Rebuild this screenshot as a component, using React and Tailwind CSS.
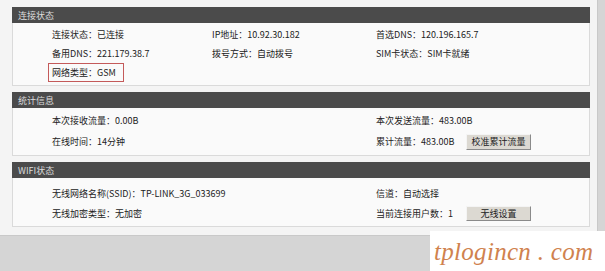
import React from "react";

const font = { fontFamily: '"Noto Sans CJK SC", "Liberation Sans", sans-serif' };

function Header({ title }) {
  return (
    <div className="h-[16px] bg-[#4b4b4b] flex items-center pl-[6px] text-[9px] text-[#dcdcdc] leading-none">
      {title}
    </div>
  );
}

function Btn({ children, h }) {
  return (
    <div
      className={`w-[65px] ${h} flex items-center justify-center text-[9px] leading-none text-[#222] bg-[#dcd9d2] border border-t-[#f4f4f4] border-l-[#f4f4f4] border-r-[#8a8a8a] border-b-[#8a8a8a]`}
    >
      {children}
    </div>
  );
}

export default function App() {
  return (
    <div
      className="relative w-[605px] h-[271px] bg-[#d5d5d5] overflow-hidden text-[#222]"
      style={font}
    >
      <div className="w-[598px] h-[236px] bg-[#f4f4f4] border-r border-b border-[#c9c9c9] pt-[7px] pl-[12px] flex flex-col">
        {/* Panel 1 */}
        <div className="w-[578px]">
          <Header title="连接状态" />
          <div className="h-[63px] bg-[#fafafa] border border-t-0 border-[#dadada] pt-[2px] text-[9px] leading-none">
            <div className="h-[19px] flex items-center">
              <div className="w-[199px] pl-[39px]">连接状态：已连接</div>
              <div className="w-[164px]">IP地址：10.92.30.182</div>
              <div>首选DNS：120.196.165.7</div>
            </div>
            <div className="h-[19px] flex items-center">
              <div className="w-[199px] pl-[39px]">备用DNS：221.179.38.7</div>
              <div className="w-[164px]">拨号方式：自动拨号</div>
              <div>SIM卡状态：SIM卡就绪</div>
            </div>
            <div className="h-[19px] flex items-center">
              <div className="pl-[35px]">
                <div className="w-[76px] h-[19px] border border-[#c45a5a] flex items-center pl-[3px]">
                  网络类型：GSM
                </div>
              </div>
            </div>
          </div>
        </div>

        {/* Panel 2 */}
        <div className="w-[578px] mt-[6px]">
          <Header title="统计信息" />
          <div className="h-[48px] bg-[#fafafa] border border-t-0 border-[#dadada] pt-[2px] text-[9px] leading-none">
            <div className="h-[21px] flex items-center">
              <div className="w-[363px] pl-[39px]">本次接收流量：0.00B</div>
              <div>本次发送流量：483.00B</div>
            </div>
            <div className="h-[21px] flex items-center">
              <div className="w-[363px] pl-[39px]">在线时间：14分钟</div>
              <div className="w-[90px]">累计流量：483.00B</div>
              <Btn h="h-[16px]">校准累计流量</Btn>
            </div>
          </div>
        </div>

        {/* Panel 3 */}
        <div className="w-[578px] mt-[6px]">
          <Header title="WIFI状态" />
          <div className="h-[49px] bg-[#fafafa] border border-t-0 border-[#dadada] pt-[5px] text-[9px] leading-none">
            <div className="h-[20px] flex items-center">
              <div className="w-[363px] pl-[39px]">无线网络名称(SSID)：TP-LINK_3G_033699</div>
              <div>信道：自动选择</div>
            </div>
            <div className="h-[20px] flex items-center">
              <div className="w-[363px] pl-[39px]">无线加密类型：无加密</div>
              <div className="w-[90px]">当前连接用户数：1</div>
              <Btn h="h-[15px]">无线设置</Btn>
            </div>
          </div>
        </div>
      </div>

      {/* watermark */}
      <div className="absolute left-[430px] top-[231px] w-[175px] h-[40px] bg-white flex items-center pl-[4px]">
        <span
          className="whitespace-nowrap text-[25px] italic leading-none text-[#d0824e] tracking-[0.3px]"
          style={{ fontFamily: '"Liberation Serif", serif' }}
        >
          tplogincn . com
        </span>
      </div>
    </div>
  );
}
